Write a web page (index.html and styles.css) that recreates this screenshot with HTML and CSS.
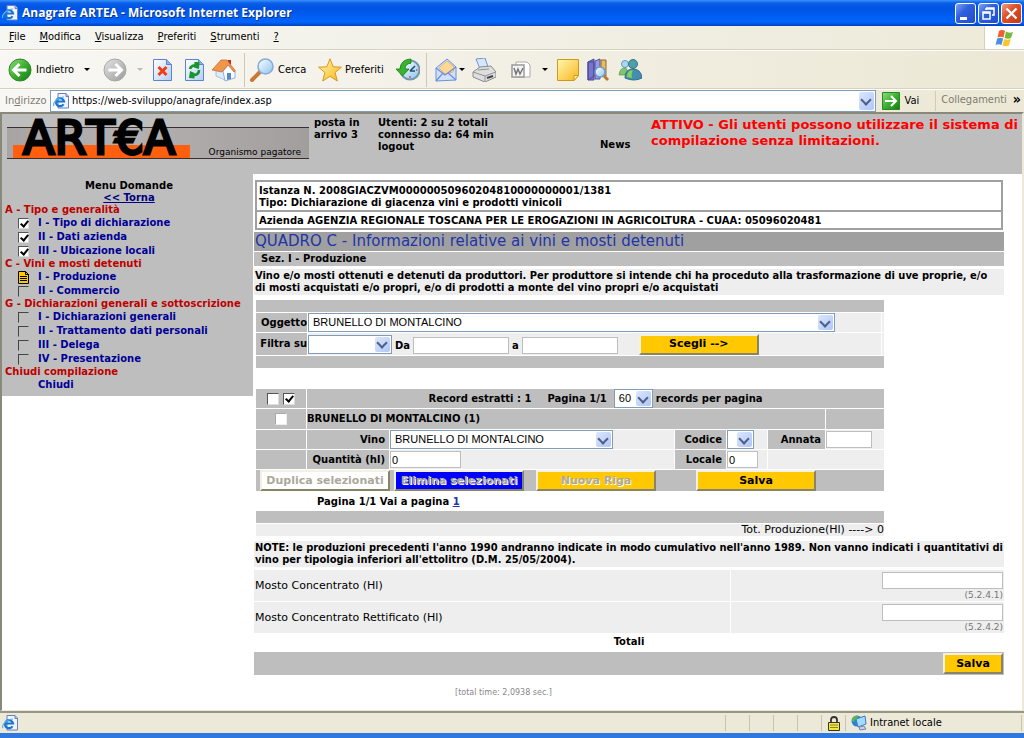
FILE: index.html
```html
<!DOCTYPE html>
<html lang="it">
<head>
<meta charset="utf-8">
<title>Anagrafe ARTEA - Microsoft Internet Explorer</title>
<link rel="stylesheet" href="styles.css">
</head>
<body>
<svg class="defs" aria-hidden="true">
  <defs>
    <linearGradient id="green" x1="0" y1="0" x2="1" y2="1"><stop offset="0" stop-color="#8fdd7c"/><stop offset=".5" stop-color="#3fae33"/><stop offset="1" stop-color="#157a12"/></linearGradient>
    <linearGradient id="silver" x1="0" y1="0" x2="1" y2="1"><stop offset="0" stop-color="#e4e4e4"/><stop offset="1" stop-color="#9a9a9a"/></linearGradient>
    <linearGradient id="paper" x1="0" y1="0" x2="1" y2="1"><stop offset="0" stop-color="#ffffff"/><stop offset="1" stop-color="#b5cdf8"/></linearGradient>
    <linearGradient id="gold" x1="0" y1="0" x2="1" y2="1"><stop offset="0" stop-color="#fff9b0"/><stop offset="1" stop-color="#f8b51c"/></linearGradient>
    <linearGradient id="glass" x1="0" y1="0" x2="1" y2="1"><stop offset="0" stop-color="#ffffff"/><stop offset="1" stop-color="#8cc4ee"/></linearGradient>
    <symbol id="ie" viewBox="0 0 16 16">
      <path d="M5 .5h8l2.500 2.500v12H5z" fill="#eef3ff" stroke="#6b7fb8"/>
      <path d="M13 .5v3h2.500" fill="#b7c6ea" stroke="#6b7fb8"/>
      <path d="M10.500 11.200A4 4 0 1 1 11 8.500H4" fill="none" stroke="#1673cf" stroke-width="2.200"/>
      <path d="M1 13C-1 10 5 4 11 4" fill="none" stroke="#58b5f0" stroke-width="1.200"/>
    </symbol>
  </defs>
</svg>
<div class="window">
  <header class="titlebar">
    <svg class="ie-icon"><use href="#ie"/></svg>
    <h1 class="title">Anagrafe ARTEA - Microsoft Internet Explorer</h1>
    <div class="window-buttons">
      <button class="wb" aria-label="Riduci a icona"><svg viewBox="0 0 19 19"><path d="M4 13h7v3H4z" fill="#fff"/></svg></button>
      <button class="wb" aria-label="Ripristina"><svg viewBox="0 0 19 19"><path d="M7 4h8v7h-2M7 4v2M7 5h8" fill="none" stroke="#fff" stroke-width="1.500"/><path d="M4 8h7v7H4zM4 9h7" fill="none" stroke="#fff" stroke-width="1.500"/></svg></button>
      <button class="wb wb-close" aria-label="Chiudi finestra"><svg viewBox="0 0 19 19"><path d="M4.500 4.500l10 10M14.500 4.500l-10 10" stroke="#fff" stroke-width="2.400"/></svg></button>
    </div>
  </header>
  <nav class="menubar">
    <div class="menus">
      <a href="#"><u>F</u>ile</a><a href="#"><u>M</u>odifica</a><a href="#"><u>V</u>isualizza</a><a href="#"><u>P</u>referiti</a><a href="#"><u>S</u>trumenti</a><a href="#"><u>?</u></a>
    </div>
    <div class="flag">
      <svg viewBox="0 0 20 18" width="20" height="18"><path d="M4 2q3-2 6 0L8.500 8.500q-3-1.500-6 0z" fill="#f0602c"/><path d="M11 2.500q3 2 7 .5l-2 6q-3 1.500-6.500 0z" fill="#78b83c"/><path d="M2.200 9.500q3-1.500 6 0L6.500 16q-3-1.500-6 0z" fill="#4a8fe0"/><path d="M9.200 10q3 1.500 6.500 0L14 16.500q-3 1.500-6.500 0z" fill="#fbc62c"/></svg>
    </div>
  </nav>
  <div class="toolbar">
    <button class="tool"><svg viewBox="0 0 24 24"><circle cx="12" cy="12" r="11" fill="url(#green)" stroke="#268a22"/><path d="M11.500 6l-6 6 6 6M6 12h12.500" fill="none" stroke="#fff" stroke-width="3"/></svg><span>Indietro</span><i class="arrow wide"></i></button>
    <button class="tool" aria-label="Avanti"><svg viewBox="0 0 24 24"><circle cx="12" cy="12" r="11" fill="url(#silver)" stroke="#a8a8a8"/><path d="M12.500 6l6 6-6 6M18 12H5.500" fill="none" stroke="#fff" stroke-width="3"/></svg><i class="arrow wide dim"></i></button>
    <button class="tool" aria-label="Termina"><svg viewBox="0 0 24 24"><path d="M3.500 1.500h13l5 5v16h-18z" fill="url(#paper)" stroke="#5d83cc"/><path d="M16.500 1.500v5h5" fill="#8fb0ec" stroke="#5d83cc"/><path d="M8.500 9l8 8M16.500 9l-8 8" stroke="#f23d14" stroke-width="3"/></svg></button>
    <button class="tool" aria-label="Aggiorna"><svg viewBox="0 0 24 24"><path d="M3.500 1.500h13l5 5v16h-18z" fill="url(#paper)" stroke="#5d83cc"/><path d="M16.500 1.500v5h5" fill="#8fb0ec" stroke="#5d83cc"/><path d="M8 11q1-4 5.500-3.500M17 12q0 5-5.500 5" fill="none" stroke="#16962b" stroke-width="2.600"/><path d="M12.500 4l5 0-.5 7-5-1.500zM12.500 20.500l-5.500-.5 1-7 4.500 2z" fill="#16962b"/></svg></button>
    <button class="tool" aria-label="Pagina iniziale"><svg viewBox="0 0 24 24"><path d="M16 2h3v7h-3z" fill="#b92b1b"/><path d="M4 11l5-6 4 7v10l-9-4z" fill="#dcecff" stroke="#8caede" stroke-width=".7"/><path d="M11 13l6-7 6 8v6l-10 3z" fill="#f8fbff" stroke="#7d9ed4" stroke-width=".8"/><path d="M0 12L9 2h6l8.500 11-1.500 1-6-7-6 7z" fill="#ef964b" stroke="#c66428" stroke-width=".7"/><path d="M15 15h4v6l-4 1z" fill="#5a86cc"/></svg></button>
    <span class="sep"></span>
    <button class="tool"><svg viewBox="0 0 24 24"><path d="M2 22l8-8" stroke="#c97935" stroke-width="4" stroke-linecap="round"/><circle cx="15.500" cy="8.500" r="7.500" fill="url(#glass)" stroke="#88abdc" stroke-width="1.600"/></svg><span>Cerca</span></button>
    <button class="tool star"><svg viewBox="0 0 24 24"><path d="M12 .8l3.200 8 8.200.4-6.300 5.300 2.200 8.500-7.300-4.700L4.700 23l2.200-8.500L.6 9.200l8.200-.4z" fill="url(#gold)" stroke="#d8981a"/></svg><span>Preferiti</span></button>
    <button class="tool" aria-label="Cronologia"><svg viewBox="0 0 24 24"><circle cx="14" cy="12" r="9.500" fill="url(#glass)" stroke="#7398ae" stroke-width="2"/><path d="M14 13l5-5M14 13h5" stroke="#244f70" stroke-width="1.600"/><path d="M14 4.500v1.500M14 18v2M21.500 12H20" stroke="#d44" stroke-width="1.300"/><path d="M15 1Q5 1 4 11H0l6.500 7L13 11H9q0-5 6-6z" fill="#39b32e" stroke="#147d18" stroke-width=".8"/></svg></button>
    <span class="sep"></span>
    <button class="tool mail" aria-label="Posta"><svg viewBox="0 0 24 24"><path d="M2 10L13 1l9 8v13L2 23z" fill="#cfe1ff" stroke="#6c8fd8"/><path d="M5 10l8-7 7 6-1 5-8 2z" fill="#ffd894" stroke="#e1a44b" stroke-width=".7"/><path d="M2 10l9 7 11-8M2 23l7-8M22 22l-8-7" fill="none" stroke="#6c8fd8" stroke-width="1.200"/></svg><i class="arrow"></i></button>
    <button class="tool" aria-label="Stampa"><svg viewBox="0 0 24 24"><path d="M4 1l9-1 3 9-8 2z" fill="#d4e7ff" stroke="#7194d6"/><path d="M1 14l7-5 11-1 5 6v5l-11 5-12-5z" fill="#dedede" stroke="#8b8b8b"/><path d="M1 14l12 4 11-4M13 18v6M6 12l11-1" fill="none" stroke="#929292"/><path d="M15 20l6-2" stroke="#444" stroke-width="2"/></svg></button>
    <button class="tool word" aria-label="Modifica con Word"><svg viewBox="0 0 24 24"><path d="M8 4h11l3 3v12H8z" fill="#fff" stroke="#aaa"/><path d="M4 7h12v12H4z" fill="#f5f5f5" stroke="#999" stroke-width="1.500"/><path d="M6 10l2 6 2-5 2 5 3-6" fill="none" stroke="#777" stroke-width="1.500"/></svg><i class="arrow wide"></i></button>
    <button class="tool" aria-label="Note"><svg viewBox="0 0 24 24"><path d="M2.500 1.500h21v16l-4.500 5H2.500z" fill="url(#gold)" stroke="#d0991e"/><path d="M19 22.500v-5h4.500z" fill="#fff3a0" stroke="#d0991e"/></svg></button>
    <button class="tool" aria-label="Ricerche"><svg viewBox="0 0 24 24"><path d="M2 4l6-3v17l-6 4zM2 4h6v18H2z" fill="#7774cc" stroke="#4a4798"/><path d="M9 3l5-2v20H9z" fill="#9b99e0" stroke="#5451a0"/><path d="M15 2h5v16h-5z" fill="#e6bd62" stroke="#8b6a2a"/><path d="M18 18l4 4" stroke="#b87834" stroke-width="3"/><circle cx="14" cy="14" r="5" fill="url(#glass)" stroke="#6f98d0" stroke-width="1.500"/></svg></button>
    <button class="tool" aria-label="Messenger"><svg viewBox="0 0 24 24"><circle cx="7" cy="6" r="3.500" fill="#a9d9f2" stroke="#5b9dc8"/><path d="M1 17q1-8 7-7l3 7z" fill="#83c46c" stroke="#4b9c55" stroke-width=".7"/><circle cx="15" cy="6" r="4.500" fill="#4f9fa8" stroke="#317680"/><path d="M7 20q0-9 8-9t9 9q-8 4-17 0z" fill="#458fae" stroke="#2e6c90"/><path d="M9 19q0-7 6-7-2 3-1 8z" fill="#87d255"/></svg></button>
  </div>
  <div class="addressbar">
    <label for="url">In<u>d</u>irizzo</label>
    <div class="url-box combo"><svg class="ie-icon"><use href="#ie"/></svg><input id="url" type="text" value="https://web-sviluppo/anagrafe/index.asp"></div>
    <button class="go"><svg viewBox="0 0 18 18" width="18" height="18"><path d="M.5.5h17v17H.5z" fill="url(#green)" stroke="#268a22"/><path d="M9 4l5 5-5 5M13 9H3" fill="none" stroke="#fff" stroke-width="2"/></svg><span>Vai</span></button>
    <div class="links"><span>Collegamenti</span><b>»</b></div>
  </div>

  <div class="page">
    <header class="site-header">
      <div class="logo" role="img" aria-label="ARTEA Organismo pagatore">
        <span class="logo-name">ART€A</span>
        <span class="logo-sub">Organismo pagatore</span>
      </div>
      <div class="mail-count">posta in<br>arrivo 3</div>
      <div class="users">Utenti: 2 su 2 totali<br>connesso da: 64 min<br><a href="#">logout</a></div>
      <a class="news" href="#">News</a>
      <p class="notice">ATTIVO - Gli utenti possono utilizzare il sistema di compilazione senza limitazioni.</p>
    </header>
    <div class="columns">
      <nav class="sidebar">
        <div class="side-title">Menu Domande</div>
        <div class="side-title"><a href="#">&lt;&lt; Torna</a></div>
        <h2>A - Tipo e generalità</h2>
        <ul>
          <li><input type="checkbox" checked id="a1"><label for="a1">I - Tipo di dichiarazione</label></li>
          <li><input type="checkbox" checked id="a2"><label for="a2">II - Dati azienda</label></li>
          <li><input type="checkbox" checked id="a3"><label for="a3">III - Ubicazione locali</label></li>
        </ul>
        <h2>C - Vini e mosti detenuti</h2>
        <ul>
          <li><svg class="doc" viewBox="0 0 11 13" width="11" height="13"><path d="M.5.5h7l3 3v9H.5z" fill="#ffc800" stroke="#000"/><path d="M7.500.5v3h3M2 5.500h7M2 7.500h7M2 9.500h7" fill="none" stroke="#000"/></svg><a href="#">I - Produzione</a></li>
          <li><input class="off" type="checkbox" id="c2"><label for="c2">II - Commercio</label></li>
        </ul>
        <h2>G - Dichiarazioni generali e sottoscrizione</h2>
        <ul>
          <li><input class="off" type="checkbox" id="g1"><label for="g1">I - Dichiarazioni generali</label></li>
          <li><input class="off" type="checkbox" id="g2"><label for="g2">II - Trattamento dati personali</label></li>
          <li><input class="off" type="checkbox" id="g3"><label for="g3">III - Delega</label></li>
          <li><input class="off" type="checkbox" id="g4"><label for="g4">IV - Presentazione</label></li>
        </ul>
        <h2>Chiudi compilazione</h2>
        <ul><li><a class="close-link" href="#">Chiudi</a></li></ul>
      </nav>
      <main class="main">
        <section class="instance">
          <p>Istanza N. 2008GIACZVM00000050960204810000000001/1381<br>Tipo: Dichiarazione di giacenza vini e prodotti vinicoli</p>
          <p>Azienda AGENZIA REGIONALE TOSCANA PER LE EROGAZIONI IN AGRICOLTURA - CUAA: 05096020481</p>
        </section>
        <h2 class="quadro">QUADRO C - Informazioni relative ai vini e mosti detenuti</h2>
        <h3 class="section-name">Sez. I - Produzione</h3>
        <p class="note intro">Vino e/o mosti ottenuti e detenuti da produttori. Per produttore si intende chi ha proceduto alla trasformazione di uve proprie, e/o di mosti acquistati e/o propri, e/o di prodotti a monte del vino propri e/o acquistati</p>

        <form class="filter panel">
          <div class="bar"></div>
          <div class="filter-row">
            <label for="oggetto">Oggetto</label>
            <div class="fields"><span class="combo combo-object"><select id="oggetto"><option>BRUNELLO DI MONTALCINO</option></select></span></div>
            <i class="edge"></i>
          </div>
          <div class="filter-row tall">
            <label for="filtra">Filtra su</label>
            <div class="fields">
              <span class="combo combo-filter"><select id="filtra"><option></option></select></span>
              <label for="da">Da</label><input class="text range" id="da" type="text">
              <label for="a">a</label><input class="text range" id="a" type="text">
              <button class="btn btn-choose" type="button">Scegli --&gt;</button>
            </div>
            <i class="edge"></i>
          </div>
          <div class="bar"></div>
        </form>

        <table class="records">
          <colgroup><col class="c1"><col class="c2"><col><col class="c4"><col class="c5"><col class="c6"><col class="c7"></colgroup>
          <tr class="head">
            <td class="center"><input type="checkbox" aria-label="Deseleziona tutti"> <input type="checkbox" checked aria-label="Seleziona tutti"></td>
            <td colspan="6"><div class="pager"><span>Record estratti : 1</span><span>Pagina 1/1</span><span class="combo combo-pages"><select id="pp"><option>60</option></select></span><label for="pp">records per pagina</label></div></td>
          </tr>
          <tr class="head name">
            <td class="center"><input class="light" type="checkbox" aria-label="Seleziona record"></td>
            <td colspan="5">BRUNELLO DI MONTALCINO (1)</td><td></td>
          </tr>
          <tr>
            <td class="key"></td>
            <td class="key"><label for="vino">Vino</label></td>
            <td><span class="combo combo-wine"><select id="vino"><option>BRUNELLO DI MONTALCINO</option></select></span></td>
            <td class="key"><label for="codice">Codice</label></td>
            <td><span class="combo combo-code"><select id="codice"><option></option></select></span></td>
            <td class="key"><label for="annata">Annata</label></td>
            <td><input class="text year" id="annata" type="text"></td>
          </tr>
          <tr>
            <td class="key"></td>
            <td class="key"><label for="qta">Quantità (hl)</label></td>
            <td><input class="text qty" id="qta" type="text" value="0"></td>
            <td class="key"><label for="locale">Locale</label></td>
            <td><input class="text place" id="locale" type="text" value="0"></td>
            <td colspan="2"></td>
          </tr>
        </table>
        <div class="panel actions">
          <button class="btn btn-copy" disabled>Duplica selezionati</button>
          <button class="btn btn-delete" disabled>Elimina selezionati</button>
          <button class="btn btn-new" disabled>Nuova Riga</button>
          <button class="btn btn-save">Salva</button>
        </div>
        <p class="pages">Pagina 1/1 Vai a pagina <a href="#">1</a></p>
        <div class="panel">
          <div class="bar"></div>
          <p class="total">Tot. Produzione(Hl) ----&gt; 0</p>
        </div>
        <p class="note">NOTE: le produzioni precedenti l'anno 1990 andranno indicate in modo cumulativo nell'anno 1989. Non vanno indicati i quantitativi di vino per tipologia inferiori all'ettolitro (D.M. 25/05/2004).</p>
        <div class="must">
          <label for="m1">Mosto Concentrato (Hl)</label>
          <div><input class="text must-input" id="m1" type="text"><small>(5.2.4.1)</small></div>
          <label for="m2">Mosto Concentrato Rettificato (Hl)</label>
          <div><input class="text must-input" id="m2" type="text"><small>(5.2.4.2)</small></div>
        </div>
        <p class="totals">Totali</p>
        <div class="save-bar"><button class="btn btn-final">Salva</button></div>
        <p class="timing">[total time: 2,0938 sec.]</p>
      </main>
    </div>
  </div>
  <footer class="status">
    <svg class="ie-icon"><use href="#ie"/></svg>
    <span class="cell first"></span><span class="cell"></span><span class="cell"></span><span class="cell"></span>
    <span class="cell"><svg viewBox="0 0 14 15" width="14" height="15"><path d="M4 7V4q0-3 3-3t3 3v3" fill="none" stroke="#333" stroke-width="1.800"/><path d="M1.500 6.500h11v8h-11z" fill="#f4e83c" stroke="#333"/><path d="M3 9h8M3 11.500h8" stroke="#8d851e"/></svg></span>
    <span class="cell zone"><svg viewBox="0 0 16 16" width="16" height="16"><circle cx="6" cy="6" r="5.500" fill="#2b83d6"/><path d="M1 4q3-5 6-3 0 4-3 4-1 3-3 1z" fill="#59b947"/><path d="M5 4l9-3 1 8-8 3z" fill="#9fdcff" stroke="#4679c2"/><path d="M8 12l5-1 2 3-6 1z" fill="#c9cfe4" stroke="#7582b4"/></svg>Intranet locale</span>
  </footer>
</div>
</body>
</html>
```
FILE: styles.css
```css
* { box-sizing: border-box; }
body { margin: 0; background: #fff; font: 11px/12px "DejaVu Sans Condensed", "DejaVu Sans", sans-serif; color: #000; }
p, h1, h2, h3, ul { margin: 0; padding: 0; font-size: inherit; }
a { color: inherit; text-decoration: none; }
button, input, select { font: inherit; color: inherit; margin: 0; }
button { padding: 0; border: 0; background: none; }
.defs { position: absolute; width: 0; height: 0; }
.window { min-height: 100vh; display: flex; flex-direction: column; border-bottom: 5px solid #2e78e0; }
.ie-icon { width: 16px; height: 16px; flex: none; }

.titlebar { height: 26px; display: flex; align-items: center; gap: 4px; padding: 0 2px; background: linear-gradient(#3c94fb 0, #0a5fe8 3px, #0054e3 8px, #0060f5 18px, #0066ff 22px, #0040bd 26px); color: #fff; }
.title { flex: 1; font: bold 12px/16px "Open Sans", sans-serif; text-shadow: 1px 1px 0 #0b2f8c; }
.window-buttons { display: flex; gap: 2px; }
.wb { width: 21px; height: 21px; border: 1px solid #fff; border-radius: 3px; background: linear-gradient(135deg, #7da3f5, #2f60dd 40%, #1f4ecb); }
.wb svg { display: block; width: 19px; height: 19px; }
.wb-close { background: linear-gradient(135deg, #f0a080, #e0502c 40%, #c03a14); }

.menubar { height: 24px; display: flex; background: linear-gradient(90deg, #f6f6f3, #edead9); border-bottom: 1px solid #d8d2bd; }
.menus { flex: 1; display: flex; align-items: center; gap: 14px; padding: 0 9px 2px; }
.flag { width: 40px; display: flex; align-items: center; justify-content: center; background: #fff; border-left: 1px solid #d8d2bd; }

.toolbar { height: 39px; display: grid; grid-template-columns: 95px 47px 32px 30px 32px 6px 66px 80px 30px 8px 38px 36px 47px 31px 32px 32px; align-items: center; padding-left: 8px; background: linear-gradient(90deg, #f8f7f4, #ece8d5); border-top: 1px solid #fff; border-bottom: 1px solid #d8d2bd; }
.tool { display: flex; align-items: center; gap: 4px; }
.tool svg { width: 24px; height: 24px; flex: none; }
.tool.star { padding-left: 2px; gap: 3px; }
.tool.mail { gap: 1px; }
.arrow { border: 3px solid transparent; border-top-color: #000; border-bottom: 0; }
.arrow.wide { margin-left: 6px; }
.arrow.dim { border-top-color: #bbb; }
.sep { width: 1px; height: 34px; background: #cdc8b2; }

.addressbar { height: 23px; display: flex; align-items: center; background: linear-gradient(90deg, #f8f7f4, #ece8d5); border-top: 1px solid #fff; padding-left: 5px; color: #7f7c73; }
.addressbar label { width: 45px; }
.url-box { flex: 1; height: 22px; display: flex; align-items: center; gap: 3px; padding-left: 2px; }
.url-box input { flex: 1; border: 0; padding: 0; outline: 0; background: none; color: #000; }
.go { display: flex; align-items: center; gap: 5px; padding: 0 16px 0 6px; color: #000; }
.links { display: flex; gap: 6px; height: 20px; border-left: 1px solid #d0cbb8; padding: 3px 3px 0 5px; }
.links b { color: #000; font-size: 14px; line-height: 10px; }

.combo { position: relative; display: inline-block; vertical-align: top; height: 19px; border: 1px solid #7f9db9; background: #fff; }
.combo.url-box { display: flex; height: 22px; }
.combo select { display: block; width: 100%; height: 100%; border: 0; padding: 0 18px 0 4px; appearance: none; background: none; outline: 0; font: 11px/15px "Liberation Sans", sans-serif; }
.combo::before { content: ""; position: absolute; right: 1px; top: 1px; bottom: 1px; width: 15px; border-radius: 2px; background: linear-gradient(135deg, #dce7fe, #b0c6f8); pointer-events: none; }
.combo::after { content: ""; position: absolute; right: 5px; top: calc(50% - 5px); width: 6px; height: 6px; border: solid #4d6185; border-width: 0 2px 2px 0; transform: rotate(45deg); pointer-events: none; }

.page { flex: 1; border-top: 2px solid #8a8878; border-left: 2px solid #8a8878; border-right: 2px solid #ece9d8; border-bottom: 1px solid #ece9d8; font: bold 10px/12px "DejaVu Sans", sans-serif; }
.site-header { min-height: 60px; display: flex; background: #bebebe; padding-left: 5px; }
.logo { position: relative; flex: 0 0 302px; height: 32px; margin-top: 13px; border: solid #3a3030; border-width: 1px 0; background: linear-gradient(#ff5f0f, #ff5f0f) 6px 17px / 177px 13px no-repeat, linear-gradient(90deg, #a8a4a4, #b6b1b1 40%, #a39e9e); font-weight: normal; }
.logo-name { position: absolute; left: 16px; top: -14px; font: 46px/48px "DejaVu Sans", sans-serif; font-kerning: none; -webkit-text-stroke: 3px #000; }
.logo-sub { position: absolute; right: 8px; bottom: 0; font-size: 9px; }
.mail-count { flex: 0 0 64px; padding: 3px 0 0 5px; }
.users { flex: 0 0 222px; padding: 3px 0 0 5px; }
.news { flex: 0 0 54px; padding: 25px 0 0 5px; }
.notice { flex: 1; color: #f00; font-size: 13px; line-height: 16px; padding: 3px 0 0 2px; }

.columns { display: flex; align-items: flex-start; }
.sidebar { flex: 0 0 251px; background: #bebebe; padding: 6px 0 4px 3px; color: #000096; }
.side-title { text-align: center; color: #000; }
.side-title a { color: #000080; text-decoration: underline; }
.sidebar h2 { color: #be0000; line-height: 12px; }
.sidebar ul { list-style: none; }
.sidebar li { display: flex; align-items: center; height: 14px; padding-left: 13px; }
.sidebar li input, .sidebar .doc { width: 11px; margin-right: 9px; }
.close-link { margin-left: 20px; }
input[type="checkbox"] { appearance: none; position: relative; width: 11px; height: 11px; border: 1px solid #555; border-right-color: #ddd; border-bottom-color: #ddd; background: #fff; vertical-align: middle; }
input[type="checkbox"].off { border-color: #444 #bebebe #bebebe #444; background: #bebebe; }
input[type="checkbox"].light { border-color: #aaa #eee #eee #aaa; }
input[type="checkbox"]:checked::after { content: ""; position: absolute; left: 3px; top: 0; width: 3px; height: 6px; border: solid #000; border-width: 0 2px 2px 0; transform: rotate(40deg); }
.records input[type="checkbox"] { width: 12px; height: 12px; }

.main { flex: 1; min-width: 0; padding: 6px 18px 10px 1px; }
.instance { margin: 0 1px 2px; border: 2px solid #a0a0a0; }
.instance p { padding: 3px 2px 1px; }
.instance p + p { border-top: 2px solid #a0a0a0; }
.quadro { background: #a0a0a0; color: #2135aa; font-size: 15px; line-height: 19px; font-weight: normal; padding-left: 1px; }
.section-name { margin: 1px 0 3px; background: #bebebe; padding: 1px 7px; }
.note { background: #eee; padding: 1px 0 1px 1px; margin-bottom: 5px; font: bold 11px/12px "DejaVu Sans Condensed", sans-serif; }
.note.intro { padding-right: 8px; }
.panel { max-width: 628px; margin-left: 2px; }
.bar { height: 12px; background: #bebebe; }
.filter-row { display: flex; gap: 1px; margin: 1px 0; height: 19px; line-height: 19px; }
.filter-row.tall { height: 22px; line-height: 22px; }
.filter-row > label { width: 51px; background: #bebebe; text-align: right; white-space: nowrap; }
.fields { flex: 1; display: flex; align-items: center; gap: 3px; background: #eee; }
.fields label { line-height: 12px; padding-top: 4px; }
.fields .text { margin-top: 3px; }
.edge { width: 2px; background: #eee; }
.text { height: 17px; border: 1px solid #bebebe; background: #fff; padding: 0 1px; font: 11px/15px "Liberation Sans", sans-serif; outline: 0; }
.combo-object { width: 527px; }
.combo-filter { width: 84px; }
.range { width: 96px; }
.btn { background: #ffc800; border: 2px solid; border-color: #f4f1e4 #888468 #888468 #f4f1e4; font: bold 11px/16px "DejaVu Sans", sans-serif; height: 21px; }
.btn:disabled { color: #aca899; text-shadow: 1px 1px 0 #fff; }
.btn-choose { width: 120px; margin-left: 18px; }

.records { width: calc(100% - 1px); max-width: 630px; margin: 20px 0 0 1px; table-layout: fixed; border-spacing: 1px; }
.c1 { width: 50px; } .c2 { width: 82px; } .c4 { width: 51px; } .c5 { width: 40px; } .c6 { width: 57px; } .c7 { width: 58px; }
.records td { height: 19px; padding: 0; background: #eee; }
.records .head td { background: #bebebe; }
.records .name td { height: 20px; }
.records .center { text-align: center; }
.records .key { background: #bebebe; text-align: right; padding-right: 4px; }
.records .text { display: block; }
.records .combo { display: block; }
.pager { display: flex; align-items: center; justify-content: center; gap: 3px; }
.pager > span:first-child { margin-right: 13px; }
.records .combo-pages { width: 39px; margin-left: 4px; }
.combo-wine { width: 223px; }
.combo-code { width: 27px; }
.year { width: 46px; }
.qty { width: 71px; }
.place { width: 31px; }
.actions { display: flex; height: 21px; background: #bebebe; padding-left: 4px; }
.btn-copy { width: 130px; margin-right: 4px; background: #fff; }
.btn-delete { width: 130px; margin-right: 12px; background: #00f; }
.btn-new { width: 120px; margin-right: 40px; }
.btn-save { width: 120px; }
.pages { padding: 5px 0 3px 63px; }
.pages a { color: #2135aa; text-decoration: underline; }
.total { margin: 1px 0 5px; background: #eee; text-align: right; font-weight: normal; font-size: 11px; }
.must { display: grid; grid-template-columns: 476px 1fr; gap: 1px; font-weight: normal; font-size: 11px; margin-top: -2px; }
.must > * { height: 31px; background: #eee; }
.must label { line-height: 31px; padding-left: 1px; }
.must div { display: flex; flex-direction: column; align-items: flex-end; padding: 2px 1px 0; }
.must small { font-size: 9px; line-height: 12px; color: #777; }
.must-input { width: 121px; }
.totals { text-align: center; padding: 3px 0 4px; }
.save-bar { display: flex; justify-content: flex-end; background: #bebebe; padding: 1px; }
.btn-final { width: 60px; }
.timing { font-size: 8px; font-weight: normal; color: #888; text-align: center; padding: 12px 251px 0 0; }

.status { height: 22px; display: flex; align-items: center; padding: 0 2px; border-top: 2px solid #999688; background: #ece9d8; }
.cell { flex: 0 0 24px; height: 16px; display: flex; align-items: center; justify-content: center; border-left: 1px solid #c8c4b0; }
.first { margin-left: auto; }
.zone { flex-basis: 177px; justify-content: flex-start; gap: 3px; padding-left: 5px; border-right: 1px solid #c8c4b0; }
```
